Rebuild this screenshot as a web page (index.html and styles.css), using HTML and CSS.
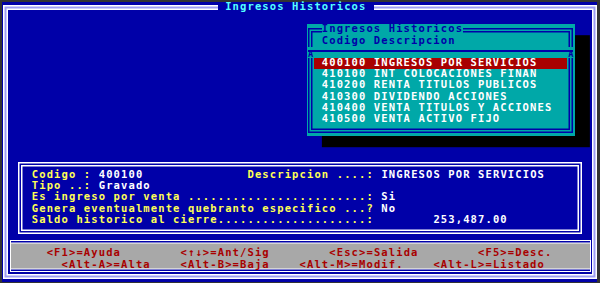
FILE: index.html
```html
<!DOCTYPE html>
<html lang="es">
<head>
<meta charset="utf-8">
<title>Ingresos Historicos</title>
<link rel="stylesheet" href="styles.css">
</head>
<body>
<div class="screen">
  <div class="window">
    <div class="win-title row"><span class="win-title-text"> Ingresos Historicos </span></div>

    <div class="popup">
      <div class="row pop-title"><span class="pop-title-text">Ingresos Historicos</span></div>
      <div class="row pop-head">Codigo Descripcion</div>
      <div class="pop-sep"><span class="arrow">A</span><span class="arrow">A</span></div>
      <ul class="pop-list">
        <li class="row item selected">400100 INGRESOS POR SERVICIOS</li>
        <li class="row item">410100 INT COLOCACIONES FINAN</li>
        <li class="row item">410200 RENTA TITULOS PUBLICOS</li>
        <li class="row item">410300 DIVIDENDO ACCIONES</li>
        <li class="row item">410400 VENTA TITULOS Y ACCIONES</li>
        <li class="row item">410500 VENTA ACTIVO FIJO</li>
      </ul>
    </div>

    <div class="panel">
      <div class="row"><span class="lbl">Codigo : </span><span class="val">400100</span><span class="lbl">              Descripcion ....: </span><span class="val">INGRESOS POR SERVICIOS</span></div>
      <div class="row"><span class="lbl">Tipo ..: </span><span class="val">Gravado</span></div>
      <div class="row"><span class="lbl">Es ingreso por venta ........................: </span><span class="val">Si</span></div>
      <div class="row"><span class="lbl">Genera eventualmente quebranto especifico ...? </span><span class="val">No</span></div>
      <div class="row"><span class="lbl">Saldo historico al cierre....................:</span><span class="val">        253,487.00</span></div>
    </div>

    <div class="footer">
      <div class="row">&lt;F1&gt;=Ayuda        &lt;↑↓&gt;=Ant/Sig        &lt;Esc&gt;=Salida        &lt;F5&gt;=Desc.</div>
      <div class="row">  &lt;Alt-A&gt;=Alta    &lt;Alt-B&gt;=Baja    &lt;Alt-M&gt;=Modif.    &lt;Alt-L&gt;=Listado</div>
    </div>
  </div>
</div>
</body>
</html>
```

FILE: styles.css
```css
* {
  box-sizing: border-box;
  margin: 0;
  padding: 0;
}

html,
body {
  width: 600px;
  height: 283px;
  overflow: hidden;
}

body {
  background: #333333;
  font-family: "DejaVu Sans Mono", monospace;
  font-weight: bold;
  font-size: 10.5px;
  letter-spacing: 1.1165px;
  line-height: 9.4px;
}

.screen {
  width: 600px;
  height: 283px;
  background: #0000a8;
  border-style: solid;
  border-color: #333333;
  border-width: 2px 3px 1px 2px;
  padding: 3px 0 3px 1px;
}

.window {
  position: relative;
  height: 100%;
  display: flex;
  flex-direction: column;
  box-shadow: inset 0 0 0 1.5px #ffffff, inset 0 0 0 3.5px #9c9cf4, inset 0 0 0 5px #ffffff;
}

.row {
  height: 11.2px;
  white-space: pre;
}

.win-title {
  margin-top: -3px;
  padding-left: 214.7px;
  display: flex;
  align-items: flex-start;
}

.win-title-text {
  background: #0000a8;
  color: #55ffff;
  white-space: pre;
}

/* popup list window */
.popup {
  position: absolute;
  left: 303.9px;
  top: 19.4px;
  width: 267.75px;
  height: 112px;
  background: #00a8a8;
  box-shadow: 14.875px 11.2px 0 #000000;
  z-index: 1;
  color: #ffffff;
}

.popup::before {
  content: "";
  position: absolute;
  top: 3.3px;
  bottom: 3.3px;
  left: 1.4px;
  right: 1.4px;
  box-shadow: inset 0 0 0 1.5px #0000a8, inset 0 0 0 3px #00a8a8, inset 0 0 0 4.5px #0000a8;
  z-index: -1;
}

.pop-title {
  padding-left: 14.875px;
  display: flex;
  align-items: flex-start;
}

.pop-title-text {
  background: #00a8a8;
  color: #0000a8;
}

.pop-head {
  padding-left: 14.875px;
  color: #0000a8;
}

.pop-sep {
  position: relative;
  height: 11.2px;
  background: #00a8a8;
  display: flex;
  justify-content: space-between;
  color: #0000a8;
}

.pop-sep::before {
  content: "";
  position: absolute;
  top: 3.5px;
  left: 1.4px;
  right: 1.4px;
  height: 1.5px;
  background: #0000a8;
}

.arrow {
  display: block;
  width: 7.4375px;
  text-align: center;
  letter-spacing: 0;
  font-size: 8.5px;
  line-height: 8px;
  padding-top: 3.4px;
}

.pop-list {
  list-style: none;
}

.item {
  margin: 0 7.4375px;
  padding-left: 7.4375px;
}

.item.selected {
  background: #a80000;
}

/* detail panel */
.panel {
  margin: 148.8px 15.5px 0 14.5px;
  height: 72px;
  padding: 8px 0 0 14.25px;
  box-shadow: inset 0 0 0 1.5px #ffffff, inset 0 0 0 3px #0000a8, inset 0 0 0 4.5px #ffffff;
}

.lbl {
  color: #ffff55;
}

.val {
  color: #ffffff;
}

/* key help footer */
.footer {
  margin: 6px 6px 0 6.5px;
  height: 32px;
  background: #a8a8a8;
  border-left: 1px solid #ffffff;
  border-right: 1px solid #ffffff;
  box-shadow: inset 0 1px 0 #ffffff, inset 0 2.5px 0 #0000a8, inset 0 3.5px 0 #ffffff,
    inset 0 -1px 0 #ffffff, inset 0 -2.5px 0 #0000a8, inset 0 -3.5px 0 #ffffff;
  padding: 8.4px 0 0 36.125px;
  color: #a80000;
}
```
